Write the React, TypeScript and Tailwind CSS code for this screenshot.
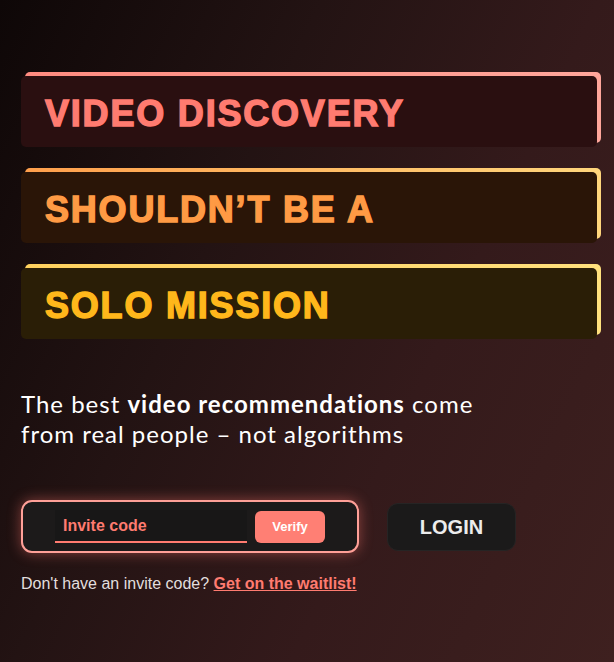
const cards = [
  {
    text: 'VIDEO DISCOVERY',
    frame: 'bg-[linear-gradient(90deg,#ff8b80,#ffa69b)]',
    card: 'bg-[#2a0f10]',
    color: 'text-[#ff7b70]',
  },
  {
    text: 'SHOULDN\u2019T BE A',
    frame: 'bg-[linear-gradient(90deg,#ff9f4c,#ffd67c)]',
    card: 'bg-[#2a1507]',
    color: 'text-[#ff9a44]',
  },
  {
    text: 'SOLO MISSION',
    frame: 'bg-[linear-gradient(90deg,#ffd15e,#ffe07d)]',
    card: 'bg-[#2a1e06]',
    color: 'text-[#ffb71b]',
  },
];

const HeadlineCard = ({ text, frame, card, color }: (typeof cards)[number]) => (
  <div className="relative h-[71px] w-[576px]">
    <div className={`absolute inset-0 translate-x-1 -translate-y-1 rounded-[5px] ${frame}`} />
    <div className={`relative flex h-full items-center rounded-[5px] pl-6 pt-[4px] ${card}`}>
      <span
        className={`font-['Liberation_Sans',Arial,sans-serif] text-[36px] font-bold leading-none tracking-[1.8px] [-webkit-text-stroke:1.4px_currentColor] ${color}`}
      >
        {text}
      </span>
    </div>
  </div>
);

export default function App() {
  return (
    <div className="min-h-[662px] w-full bg-[linear-gradient(115deg,#0e0707_0%,#231313_35%,#341a1b_65%,#3e201f_100%)] font-['Liberation_Sans',Arial,sans-serif]">
      <div className="flex flex-col pl-[21px] pt-[76px]">
        <div className="flex flex-col gap-[25px]">
          {cards.map((c) => (
            <HeadlineCard key={c.text} {...c} />
          ))}
        </div>

        <p className="mt-[50px] font-['Lato','Noto_Sans',sans-serif] text-[24px] leading-[30px] tracking-[1px] text-white">
          The best <b className="font-bold">video recommendations</b> come
          <br />
          from real people – not algorithms
        </p>

        <div className="mt-[51px] flex items-center gap-7">
          <div className="flex h-[53px] w-[338px] items-center gap-2 rounded-[11px] border-2 border-[#ffa098] bg-[#1c1a1a] px-8 shadow-[0_0_14px_rgba(255,120,110,0.45)]">
            <div className="flex h-[33px] w-[192px] items-center border-b-2 border-[#ff7b70] bg-[#181717] pl-2">
              <span className="text-[16px] font-bold text-[#ff7b70]">Invite code</span>
            </div>
            <button
              type="button"
              className="flex h-[32px] w-[70px] items-center justify-center rounded-[6px] bg-[#ff7f74] text-[13px] font-bold text-white"
            >
              Verify
            </button>
          </div>
          <button
            type="button"
            className="flex h-[48px] w-[129px] items-center justify-center rounded-[11px] border border-[#262424] bg-[#1b1a1a] text-[20px] font-bold text-[#ececec]"
          >
            LOGIN
          </button>
        </div>

        <p className="mt-[19px] text-[16px] text-[#e2dede]">
          Don&apos;t have an invite code?{' '}
          <a href="#" className="font-bold text-[#ff7b70] underline">
            Get on the waitlist!
          </a>
        </p>
      </div>
    </div>
  );
}
